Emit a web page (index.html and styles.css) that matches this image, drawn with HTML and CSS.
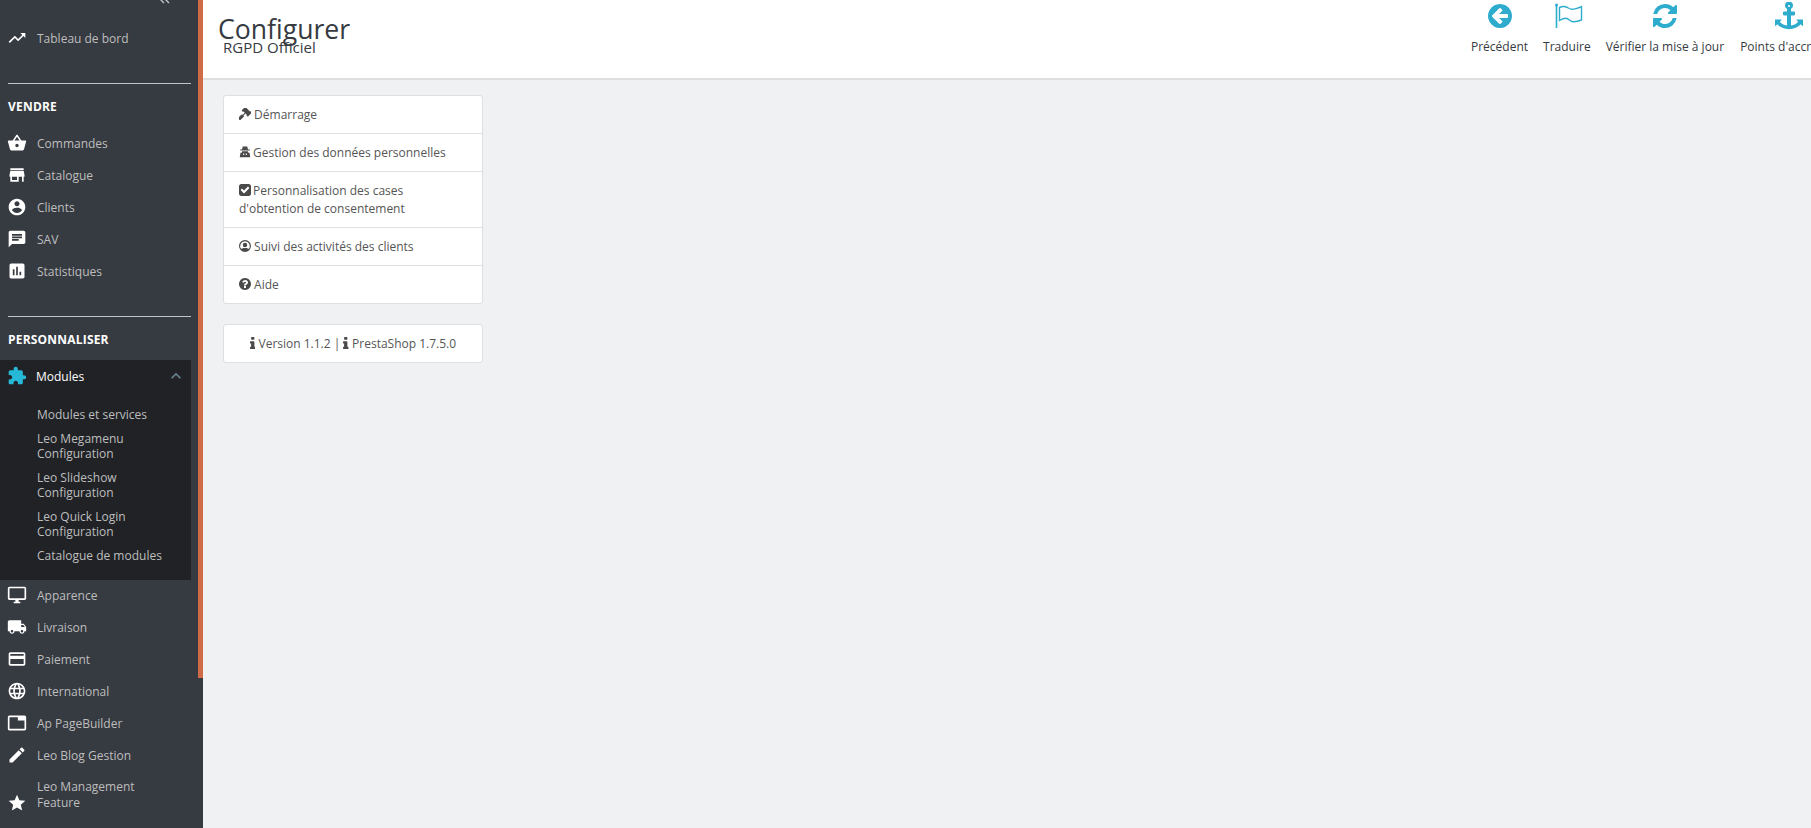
FILE: index.html
```html
<!DOCTYPE html>
<html lang="fr">
<head>
  <meta charset="UTF-8">
  <title>Configurer - RGPD Officiel</title>
  <link rel="stylesheet" href="styles.css">
</head>
<body>
  <div class="layout">
    <aside class="sidebar">
      <div class="collapse-mark"><svg width="12" height="12" viewBox="0 0 12 12"><path d="M6 0 1 5l5 5M11 0 6 5l5 5" fill="none" stroke="#bfc5cb" stroke-width="1.4"/></svg></div>
      <a class="nav-item"><svg class="nav-icon" viewBox="0 0 24 24"><path d="M16 6l2.29 2.29-4.88 4.88-4-4L2 16.59 3.41 18l6-6 4 4 6.3-6.29L22 12V6z"/></svg>Tableau de bord</a>

      <div class="nav-section">
        <h4>VENDRE</h4>
        <a class="nav-item"><svg class="nav-icon" viewBox="0 0 24 24"><path d="M17.21 9l-4.38-6.56c-.19-.28-.51-.42-.83-.42-.32 0-.64.14-.83.43L6.79 9H2c-.55 0-1 .45-1 1 0 .09.01.18.04.27l2.54 9.27c.23.84 1 1.46 1.92 1.46h13c.92 0 1.69-.62 1.93-1.46l2.54-9.27L23 10c0-.55-.45-1-1-1h-4.79zM9 9l3-4.4L15 9H9zm3 8c-1.1 0-2-.9-2-2s.9-2 2-2 2 .9 2 2-.9 2-2 2z"/></svg>Commandes</a>
        <a class="nav-item"><svg class="nav-icon" viewBox="0 0 24 24"><path d="M20 4H4v2h16V4zm1 10v-2l-1-5H4l-1 5v2h1v6h10v-6h4v6h2v-6h1zm-9 4H6v-4h6v4z"/></svg>Catalogue</a>
        <a class="nav-item"><svg class="nav-icon" viewBox="0 0 24 24"><path d="M12 2C6.48 2 2 6.48 2 12s4.48 10 10 10 10-4.48 10-10S17.52 2 12 2zm0 3c1.66 0 3 1.34 3 3s-1.34 3-3 3-3-1.34-3-3 1.34-3 3-3zm0 14.2c-2.5 0-4.71-1.28-6-3.22.03-1.99 4-3.08 6-3.08 1.99 0 5.97 1.09 6 3.08-1.29 1.94-3.5 3.22-6 3.22z"/></svg>Clients</a>
        <a class="nav-item"><svg class="nav-icon" viewBox="0 0 24 24"><path d="M20 2H4c-1.1 0-1.99.9-1.99 2L2 22l4-4h14c1.1 0 2-.9 2-2V4c0-1.1-.9-2-2-2zM6 9h12v2H6V9zm8 5H6v-2h8v2zm4-6H6V6h12v2z"/></svg>SAV</a>
        <a class="nav-item"><svg class="nav-icon" viewBox="0 0 24 24"><path d="M19 3H5c-1.1 0-2 .9-2 2v14c0 1.1.9 2 2 2h14c1.1 0 2-.9 2-2V5c0-1.1-.9-2-2-2zM9 17H7v-7h2v7zm4 0h-2V7h2v10zm4 0h-2v-4h2v4z"/></svg>Statistiques</a>
      </div>

      <div class="nav-section">
        <h4>PERSONNALISER</h4>
        <div class="nav-open">
          <a class="nav-item active"><svg class="nav-icon" viewBox="0 0 24 24"><path d="M20.5 11H19V7c0-1.1-.9-2-2-2h-4V3.5C13 2.12 11.88 1 10.5 1S8 2.12 8 3.5V5H4c-1.1 0-1.99.9-1.99 2v3.8H3.5c1.49 0 2.7 1.21 2.7 2.7s-1.21 2.7-2.7 2.7H2V20c0 1.1.9 2 2 2h3.8v-1.5c0-1.49 1.21-2.7 2.7-2.7 1.49 0 2.7 1.21 2.7 2.7V22H17c1.1 0 2-.9 2-2v-4h1.5c1.38 0 2.5-1.12 2.5-2.5S21.88 11 20.5 11z"/></svg>Modules<svg class="nav-chevron" viewBox="0 0 24 24"><path d="M12 8l-6 6 1.41 1.41L12 10.83l4.59 4.58L18 14z"/></svg></a>
          <ul class="subnav">
            <li>Modules et services</li>
            <li>Leo Megamenu Configuration</li>
            <li>Leo Slideshow Configuration</li>
            <li>Leo Quick Login Configuration</li>
            <li>Catalogue de modules</li>
          </ul>
        </div>
        <a class="nav-item"><svg class="nav-icon" viewBox="0 0 24 24"><path d="M21 2H3c-1.1 0-2 .9-2 2v12c0 1.1.9 2 2 2h7v2H8v2h8v-2h-2v-2h7c1.1 0 2-.9 2-2V4c0-1.1-.9-2-2-2zm0 14H3V4h18v12z"/></svg>Apparence</a>
        <a class="nav-item"><svg class="nav-icon" viewBox="0 0 24 24"><path d="M20 8h-3V4H3c-1.1 0-2 .9-2 2v11h2c0 1.66 1.34 3 3 3s3-1.34 3-3h6c0 1.66 1.34 3 3 3s3-1.34 3-3h2v-5l-3-4zM6 18.5c-.83 0-1.5-.67-1.5-1.5s.67-1.5 1.5-1.5 1.5.67 1.5 1.5-.67 1.5-1.5 1.5zm13.5-9l1.96 2.5H17V9.5h2.5zm-1.5 9c-.83 0-1.5-.67-1.5-1.5s.67-1.5 1.5-1.5 1.5.67 1.5 1.5-.67 1.5-1.5 1.5z"/></svg>Livraison</a>
        <a class="nav-item"><svg class="nav-icon" viewBox="0 0 24 24"><path d="M20 4H4c-1.11 0-1.99.89-1.99 2L2 18c0 1.11.89 2 2 2h16c1.11 0 2-.89 2-2V6c0-1.11-.89-2-2-2zm0 14H4v-6h16v6zm0-10H4V6h16v2z"/></svg>Paiement</a>
        <a class="nav-item"><svg class="nav-icon" viewBox="0 0 24 24"><path d="M11.99 2C6.47 2 2 6.48 2 12s4.47 10 9.99 10C17.52 22 22 17.52 22 12S17.52 2 11.99 2zm6.93 6h-2.95c-.32-1.25-.78-2.45-1.38-3.56 1.84.63 3.37 1.91 4.33 3.56zM12 4.04c.83 1.2 1.48 2.53 1.91 3.96h-3.82c.43-1.43 1.08-2.76 1.91-3.96zM4.26 14C4.1 13.36 4 12.69 4 12s.1-1.36.26-2h3.38c-.08.66-.14 1.32-.14 2 0 .68.06 1.34.14 2H4.26zm.82 2h2.95c.32 1.25.78 2.45 1.38 3.56-1.84-.63-3.37-1.9-4.33-3.56zm2.95-8H5.08c.96-1.66 2.49-2.93 4.33-3.56C8.81 5.55 8.35 6.75 8.03 8zM12 19.96c-.83-1.2-1.48-2.53-1.91-3.96h3.82c-.43 1.43-1.08 2.76-1.91 3.96zM14.34 14H9.66c-.09-.66-.16-1.32-.16-2 0-.68.07-1.35.16-2h4.68c.09.65.16 1.32.16 2 0 .68-.07 1.34-.16 2zm.25 5.56c.6-1.11 1.06-2.31 1.38-3.56h2.95c-.96 1.65-2.49 2.93-4.33 3.56zM16.36 14c.08-.66.14-1.32.14-2 0-.68-.06-1.34-.14-2h3.38c.16.64.26 1.31.26 2s-.1 1.36-.26 2h-3.38z"/></svg>International</a>
        <a class="nav-item"><svg class="nav-icon" viewBox="0 0 24 24"><path d="M21 3H3c-1.1 0-2 .9-2 2v14c0 1.1.9 2 2 2h18c1.1 0 2-.9 2-2V5c0-1.1-.9-2-2-2zm0 16H3V5h10v4h8v10z"/></svg>Ap PageBuilder</a>
        <a class="nav-item"><svg class="nav-icon" viewBox="0 0 24 24"><path d="M3 17.25V21h3.75L17.81 9.94l-3.75-3.75L3 17.25zM20.71 7.04c.39-.39.39-1.02 0-1.41l-2.34-2.34c-.39-.39-1.02-.39-1.41 0l-1.83 1.83 3.75 3.75 1.83-1.83z"/></svg>Leo Blog Gestion</a>
        <a class="nav-item tall"><svg class="nav-icon" viewBox="0 0 24 24"><path d="M12 17.27L18.18 21l-1.64-7.03L22 9.24l-7.19-.61L12 2 9.19 8.63 2 9.24l5.46 4.73L5.82 21z"/></svg><span>Leo Management Feature</span></a>
      </div>
    </aside>

    <div class="side-rail"><div class="scroll-accent"></div></div>

    <main class="main">
      <header class="page-head">
        <div class="page-title">
          <h2>Configurer</h2>
          <p>RGPD Officiel</p>
        </div>
        <nav class="toolbar">
          <a class="tool">
            <svg viewBox="0 0 1792 1792"><path d="M1408 960v-128q0-26-19-45t-45-19h-502l189-189q19-19 19-45t-19-45l-91-91q-18-18-45-18t-45 18l-362 362-91 91q-18 18-18 45t18 45l91 91 362 362q18 18 45 18t45-18l91-91q18-18 18-45t-18-45l-189-189h502q26 0 45-19t19-45zm256-64q0 209-103 385.500t-279.500 279.500-385.500 103-385.500-103-279.500-279.500-103-385.500 103-385.500 279.500-279.500 385.500-103 385.500 103 279.500 279.500 103 385.500z"/></svg>
            <span>Précédent</span>
          </a>
          <a class="tool">
            <svg class="tool-flag" viewBox="0 0 28 28"><path d="M1.500 3V26" fill="none" stroke="#2eacce" stroke-width="1.600"/><circle cx="1.500" cy="3" r="1.500" fill="#2eacce"/><path d="M4.500 5.500c2-1 4-1.200 6-.8 2.500.6 4 2.600 6.500 2.600 3 0 6.500-1.300 9.500-2.600V18c-3 1.300-6 2-9 1.700-2.500-.4-4-3.400-6.500-3.400-2 0-4.500 1-6.500 2.200z" fill="none" stroke="#2eacce" stroke-width="1.400"/></svg>
            <span>Traduire</span>
          </a>
          <a class="tool">
            <svg viewBox="0 0 1792 1792"><path d="M1639 1056q0 5-1 7-64 268-268 434.5t-478 166.5q-146 0-282.5-55t-243.5-157l-129 129q-19 19-45 19t-45-19-19-45v-448q0-26 19-45t45-19h448q26 0 45 19t19 45-19 45l-137 137q71 66 161 102t187 36q134 0 250-65t186-179q11-17 53-117 8-23 30-23h192q13 0 22.5 9.5t9.5 22.5zm25-800v448q0 26-19 45t-45 19h-448q-26 0-45-19t-19-45 19-45l138-138q-148-137-349-137-134 0-250 65t-186 179q-11 17-53 117-8 23-30 23h-199q-13 0-22.5-9.5t-9.5-22.5v-7q65-268 270-434.5t480-166.5q146 0 284 55.5t245 156.5l130-129q19-19 45-19t45 19 19 45z"/></svg>
            <span>Vérifier la mise à jour</span>
          </a>
          <a class="tool tool-last">
            <svg viewBox="0 0 1792 1792"><path d="M960 256q0-26-19-45t-45-19-45 19-19 45 19 45 45 19 45-19 19-45zm832 888v352q0 22-20 30-8 2-12 2-12 0-23-9l-93-93q-119 143-318.500 226.500t-429.500 83.500-429.500-83.500-318.500-226.500l-93 93q-9 9-23 9-4 0-12-2-20-8-20-30v-352q0-14 9-23t23-9h352q22 0 30 20 8 19-7 35l-100 100q67 91 189.500 153.500t271.500 82.500v-647h-192q-26 0-45-19t-19-45v-128q0-26 19-45t45-19h192v-163q-58-34-93-92.500t-35-128.500q0-106 75-181t181-75 181 75 75 181q0 70-35 128.500t-93 92.500v163h192q26 0 45 19t19 45v128q0 26-19 45t-45 19h-192v647q149-20 271.500-82.500t189.500-153.500l-100-100q-15-16-7-35 8-20 30-20h352q14 0 23 9t9 23z"/></svg>
            <span>Points d'accroche</span>
          </a>
        </nav>
      </header>

      <div class="content">
        <div class="card menu-card">
          <a class="menu-row"><svg class="fa" viewBox="128 128 1536 1536"><g transform="matrix(-1 0 0 1 1792 0)"><path d="M1771 1440q0 53-37 90l-107 108q-39 37-91 37-53 0-90-37l-363-364q-38-36-38-90 0-53 43-96l-256-256-126 126q-14 14-34 14t-34-14q2 2 12.500 12t12.500 13 10 11.500 10 13.500 6 13.500 5.500 16.500 1.500 18q0 38-28 68-3 3-16.500 18t-19 20.500-18.500 16.500-22 15.500-22 9-26 4.500q-40 0-68-28l-408-408q-28-28-28-68 0-13 4.500-26t9-22 15.500-22 16.500-18.500 20.500-19 18-16.500q30-28 68-28 10 0 18 1.500t16.500 5.500 13.500 6 13.500 10 11.500 10 13 12.500 12 12.500q-14-14-14-34t14-34l348-348q14-14 34-14t34 14q-2-2-12.500-12t-12.500-13-10-11.500-10-13.500-6-13.500-5.500-16.500-1.500-18q0-38 28-68 3-3 16.500-18t19-20.500 18.500-16.500 22-15.500 22-9 26-4.500q40 0 68 28l408 408q28 28 28 68 0 13-4.500 26t-9 22-15.500 22-16.500 18.500-20.500 19-18 16.500q-30 28-68 28-10 0-18-1.500t-16.500-5.500-13.500-6-13.500-10-11.500-10-13-12.500-12-12.500q14 14 14 34t-14 34l-126 126 256 256q43-43 96-43 52 0 91 37l363 363q37 39 37 91z"/></g></svg> Démarrage</a>
          <a class="menu-row"><svg class="fa fa-tight" viewBox="0 0 16 16"><path fill-rule="evenodd" d="M5 .5h6l1 4h2.500v1.500h-13V4.500H4zM4 7h8v1.500l2 .5 1 6H1l1-6 2-.5zM5.500 10v2h1.500v-2zm3.500 0v2h1.500v-2z"/></svg> Gestion des données personnelles</a>
          <a class="menu-row"><svg class="fa fa-tight" viewBox="128 128 1536 1536"><path d="M813 1299l614-614q19-19 19-45t-19-45l-102-102q-19-19-45-19t-45 19l-467 467-211-211q-19-19-45-19t-45 19l-102 102q-19 19-19 45t19 45l358 358q19 19 45 19t45-19zm851-883v960q0 119-84.500 203.500t-203.500 84.500h-960q-119 0-203.500-84.500t-84.500-203.500v-960q0-119 84.500-203.500t203.500-84.500h960q119 0 203.500 84.500t84.500 203.500z"/></svg> Personnalisation des cases d'obtention de consentement</a>
          <a class="menu-row"><svg class="fa" viewBox="0 0 16 16"><path fill-rule="evenodd" d="M8 0a8 8 0 1 1 0 16A8 8 0 0 1 8 0zm0 1.600a6.400 6.400 0 0 0-5 10.400c1-1.100 2.800-1.500 5-1.500s4 .4 5 1.500A6.400 6.400 0 0 0 8 1.600zM8 3.500a3 3 0 1 1 0 6 3 3 0 0 1 0-6z"/></svg> Suivi des activités des clients</a>
          <a class="menu-row"><svg class="fa" viewBox="128 128 1536 1536"><path d="M1024 1376v-192q0-14-9-23t-23-9h-192q-14 0-23 9t-9 23v192q0 14 9 23t23 9h192q14 0 23-9t9-23zm256-672q0-88-55.500-163t-138.500-116-170-41q-243 0-371 213-15 24 8 42l132 100q7 6 19 6 16 0 25-12 53-68 86-92 34-24 86-24 48 0 85.500 26t37.500 59q0 38-20 61t-68 45q-63 28-115.500 86.500t-52.500 125.500v36q0 14 9 23t23 9h192q14 0 23-9t9-23q0-19 21.500-49.500t54.500-49.500q32-18 49-28.500t46-35 44.500-48 28-60.500 12.500-81zm384 192q0 209-103 385.500t-279.500 279.500-385.500 103-385.500-103-279.500-279.500-103-385.500 103-385.500 279.500-279.500 385.500-103 385.500 103 279.500 279.500 103 385.500z"/></svg> Aide</a>
        </div>
        <div class="card version-card">
          <svg class="fa info" viewBox="576 128 640 1408"><path d="M1216 1344v128q0 26-19 45t-45 19h-512q-26 0-45-19t-19-45v-128q0-26 19-45t45-19h64v-384h-64q-26 0-45-19t-19-45v-128q0-26 19-45t45-19h384q26 0 45 19t19 45v576h64q26 0 45 19t19 45zm-128-1152v192q0 26-19 45t-45 19h-256q-26 0-45-19t-19-45v-192q0-26 19-45t45-19h256q26 0 45 19t19 45z"/></svg> Version 1.1.2 | <svg class="fa info" viewBox="576 128 640 1408"><path d="M1216 1344v128q0 26-19 45t-45 19h-512q-26 0-45-19t-19-45v-128q0-26 19-45t45-19h64v-384h-64q-26 0-45-19t-19-45v-128q0-26 19-45t45-19h384q26 0 45 19t19 45v576h64q26 0 45 19t19 45zm-128-1152v192q0 26-19 45t-45 19h-256q-26 0-45-19t-19-45v-192q0-26 19-45t45-19h256q26 0 45 19t19 45z"/></svg> PrestaShop 1.7.5.0
        </div>
      </div>
    </main>
  </div>
</body>
</html>
```

FILE: styles.css
```css
html, body {
  height: 100%;
  margin: 0;
  overflow: hidden;
}
body {
  font-family: "Open Sans", sans-serif;
  font-size: 12px;
  background-color: #eff1f2;
  color: #363a41;
}
.layout {
  display: flex;
  height: 828px;
}

/* Sidebar */
.sidebar {
  width: 198px;
  flex-shrink: 0;
  background-color: #363a41;
  overflow: hidden;
}
.collapse-mark {
  display: flex;
  justify-content: flex-end;
  height: 22px;
  padding-right: 28px;
  margin-top: -7px;
  margin-bottom: 7px;
}
.nav-item {
  display: flex;
  align-items: center;
  height: 32px;
  width: 191px;
  padding-left: 7px;
  box-sizing: border-box;
  color: #bebebe;
  font-size: 12px;
  white-space: nowrap;
}
.nav-icon {
  width: 20px;
  height: 20px;
  flex-shrink: 0;
  margin-right: 10px;
  fill: #fff;
}
.nav-section {
  width: 183px;
  margin: 29px 0 0 8px;
  border-top: 1px solid #bcc6cc;
}
.nav-section h4 {
  margin: 14px 0 11px;
  height: 18px;
  line-height: 18px;
  color: #fff;
  font-size: 12px;
  font-weight: 700;
  letter-spacing: 0.2px;
}
.nav-section .nav-item {
  margin-left: -8px;
}
.nav-open {
  width: 191px;
  margin-left: -8px;
  margin-bottom: -1px;
  background-color: #202226;
  padding-bottom: 8px;
}
.nav-open .nav-item {
  margin-left: 0;
}
.nav-item.active {
  color: #fff;
}
.nav-item.active .nav-icon {
  fill: #25b9d7;
  margin-right: 9px;
}
.nav-chevron {
  width: 20px;
  height: 20px;
  margin-left: auto;
  margin-right: 5px;
  fill: #6c868e;
}
.subnav {
  list-style: none;
  margin: 0;
  padding: 15px 24px 0 37px;
  color: #bebebe;
  font-size: 12px;
  line-height: 15px;
}
.subnav li {
  margin-bottom: 9px;
}
.nav-item.tall {
  align-items: flex-end;
  height: 42px;
  white-space: normal;
  line-height: 16px;
}
.nav-item.tall span {
  width: 110px;
  margin-bottom: 2px;
}

.side-rail {
  width: 5px;
  flex-shrink: 0;
  background-color: #363a41;
}
.scroll-accent {
  height: 678px;
  background-color: #cf6c47;
}

/* Main column */
.main {
  flex: 1;
  min-width: 0;
  background-color: #eff1f2;
}
.page-head {
  display: flex;
  height: 78px;
  background-color: #fff;
  border-bottom: 2px solid #dfdfdf;
  overflow: hidden;
}
.page-title {
  width: 1268px;
  flex-shrink: 0;
  padding: 10px 0 0 15px;
  box-sizing: border-box;
}
.page-title h2 {
  margin: 0;
  font-size: 26.6px;
  font-weight: 400;
  line-height: 38px;
  color: #363a41;
}
.page-title p {
  margin: -11px 0 0 5px;
  font-size: 15px;
  line-height: 20px;
}
.toolbar {
  display: flex;
  gap: 15px;
  flex-shrink: 0;
}
.tool {
  display: flex;
  flex-direction: column;
  align-items: center;
  height: 78px;
  padding-top: 2px;
  box-sizing: border-box;
  color: #363a41;
  font-size: 12px;
  white-space: nowrap;
}
.tool-last {
  margin-left: 1px;
}
.tool svg {
  flex-shrink: 0;
  width: 28px;
  height: 28px;
  fill: #2eacce;
}
.tool .tool-flag {
  margin-left: 4px;
}
.tool span {
  margin-top: 8px;
  line-height: 17px;
}

/* Content cards */
.content {
  padding: 15px 0 0 20px;
}
.card {
  width: 260px;
  box-sizing: border-box;
  background-color: #fff;
  border: 1px solid #dfdfdf;
  border-radius: 3px;
  color: #555;
  font-size: 12px;
  line-height: 18px;
}
.menu-row {
  display: block;
  padding: 10px 15px 9px;
  border-bottom: 1px solid #dfdfdf;
}
.menu-row:last-child {
  border-bottom: 0;
}
.fa {
  display: inline-block;
  width: 12px;
  height: 12px;
  vertical-align: -1px;
  fill: #4a4a4a;
}
.fa-tight {
  margin-right: -1px;
}
.fa.info {
  width: 5.5px;
}
.version-card {
  margin-top: 20px;
  padding: 10px 0 9px;
  text-align: center;
}
```
